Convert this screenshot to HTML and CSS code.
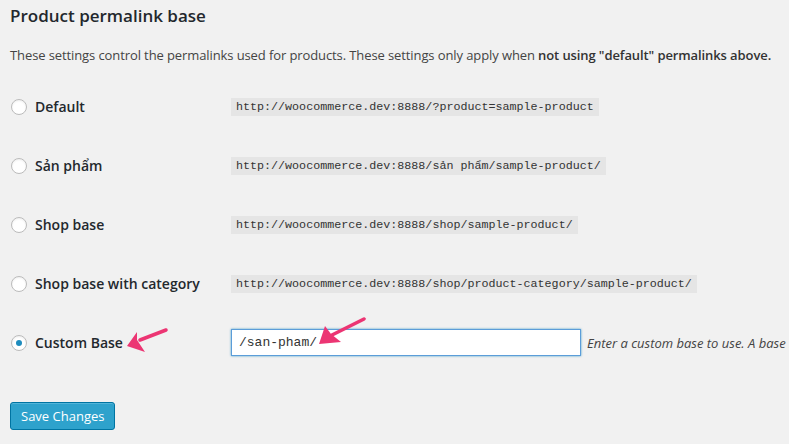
FILE: index.html
```html
<html>
<head>
<title>Permalink Settings</title>
<link rel="stylesheet" href="styles.css">
</head>
<body>
<div class="wrap">
<h2>Product permalink base</h2>
<p class="intro">These settings control the permalinks used for products. These settings only apply when <strong>not using "default" permalinks above.</strong></p>

<div class="rows">
  <div class="row">
    <label class="choice"><input type="radio" name="base"> Default</label>
    <code>http://woocommerce.dev:8888/?product=sample-product</code>
  </div>
  <div class="row">
    <label class="choice"><input type="radio" name="base"> Sản phẩm</label>
    <code>http://woocommerce.dev:8888/sản phẩm/sample-product/</code>
  </div>
  <div class="row">
    <label class="choice"><input type="radio" name="base"> Shop base</label>
    <code>http://woocommerce.dev:8888/shop/sample-product/</code>
  </div>
  <div class="row">
    <label class="choice"><input type="radio" name="base"> Shop base with category</label>
    <code>http://woocommerce.dev:8888/shop/product-category/sample-product/</code>
  </div>
  <div class="row">
    <label class="choice"><input type="radio" name="base" checked> Custom Base</label>
    <input type="text" class="custom" value="/san-pham/">
    <span class="description">Enter a custom base to use. A base must be set or WordPress will use default instead.</span>
  </div>
</div>

<button class="button-primary">Save Changes</button>
</div>

<svg class="marks" width="789" height="444" viewBox="0 0 789 444">
  <!-- arrow at label -->
  <path d="M166 330 L140 340" stroke="#ec3573" stroke-width="3.5" stroke-linecap="round" fill="none"/>
  <path d="M127 346 L137 332 L137 340 L145 352 Z" fill="#ec3573"/>
  <!-- arrow at input -->
  <path d="M364 319 L332 335" stroke="#ec3573" stroke-width="3.5" stroke-linecap="round" fill="none"/>
  <path d="M319 344 L325 326 L331 334 L341 342 Z" fill="#ec3573"/>
</svg>
</body>
</html>
```

FILE: styles.css
```css
html {
  margin: 0;
  padding: 0;
}
body {
  margin: 0;
  background: #f1f1f1;
  color: #444;
  font-family: "Open Sans", sans-serif;
  font-size: 13px;
  overflow: hidden;
}
.wrap {
  padding: 0 10px;
  overflow: hidden;
}
h2 {
  margin: 0;
  padding-top: 4px;
  font-size: 17px;
  line-height: 23px;
  font-weight: 600;
  color: #23282d;
}
.intro {
  margin: 18px 0 12px;
  line-height: 20px;
  white-space: nowrap;
  letter-spacing: -0.1px;
}
.intro strong {
  font-weight: 600;
  color: #333;
  letter-spacing: -0.1px;
}
.row {
  display: flex;
  align-items: center;
  height: 59px;
}
.choice {
  display: flex;
  align-items: center;
  width: 221px;
  flex: none;
  font-size: 14px;
  font-weight: 600;
  color: #23282d;
}
.choice input {
  -webkit-appearance: none;
  appearance: none;
  width: 16px;
  height: 16px;
  margin: 0 8px 0 1px;
  border: 1px solid #bbb;
  border-radius: 50%;
  background: #fff;
  box-shadow: inset 0 1px 2px rgba(0,0,0,.07);
  display: flex;
  align-items: center;
  justify-content: center;
}
.choice input:checked::before {
  content: "";
  width: 6px;
  height: 6px;
  border-radius: 50%;
  background: #1e8cbe;
}
code {
  font-family: "Liberation Mono", monospace;
  font-size: 11.7px;
  line-height: 18px;
  padding: 0 5px;
  background: #e5e5e5;
  color: #333;
}
.custom {
  width: 350px;
  height: 27px;
  box-sizing: border-box;
  border: 1px solid #5b9dd9;
  box-shadow: 0 0 2px rgba(30,140,190,.8);
  background: #fff;
  padding: 0 7px;
  font-family: "Liberation Mono", monospace;
  font-size: 13px;
  color: #333;
  margin: 0;
  flex: none;
}
.description {
  margin-left: 6px;
  font-style: italic;
  white-space: nowrap;
  color: #444;
}
.button-primary {
  margin-top: 30px;
  height: 28px;
  padding: 0 10px 1px;
  background: #2ea2cc;
  border: 1px solid #0074a2;
  border-radius: 3px;
  box-shadow: inset 0 1px 0 rgba(120,200,230,.5);
  color: #fff;
  font-family: "Open Sans", sans-serif;
  font-size: 13px;
  cursor: pointer;
}
.marks {
  position: absolute;
  left: 0;
  top: 0;
  pointer-events: none;
}
```
